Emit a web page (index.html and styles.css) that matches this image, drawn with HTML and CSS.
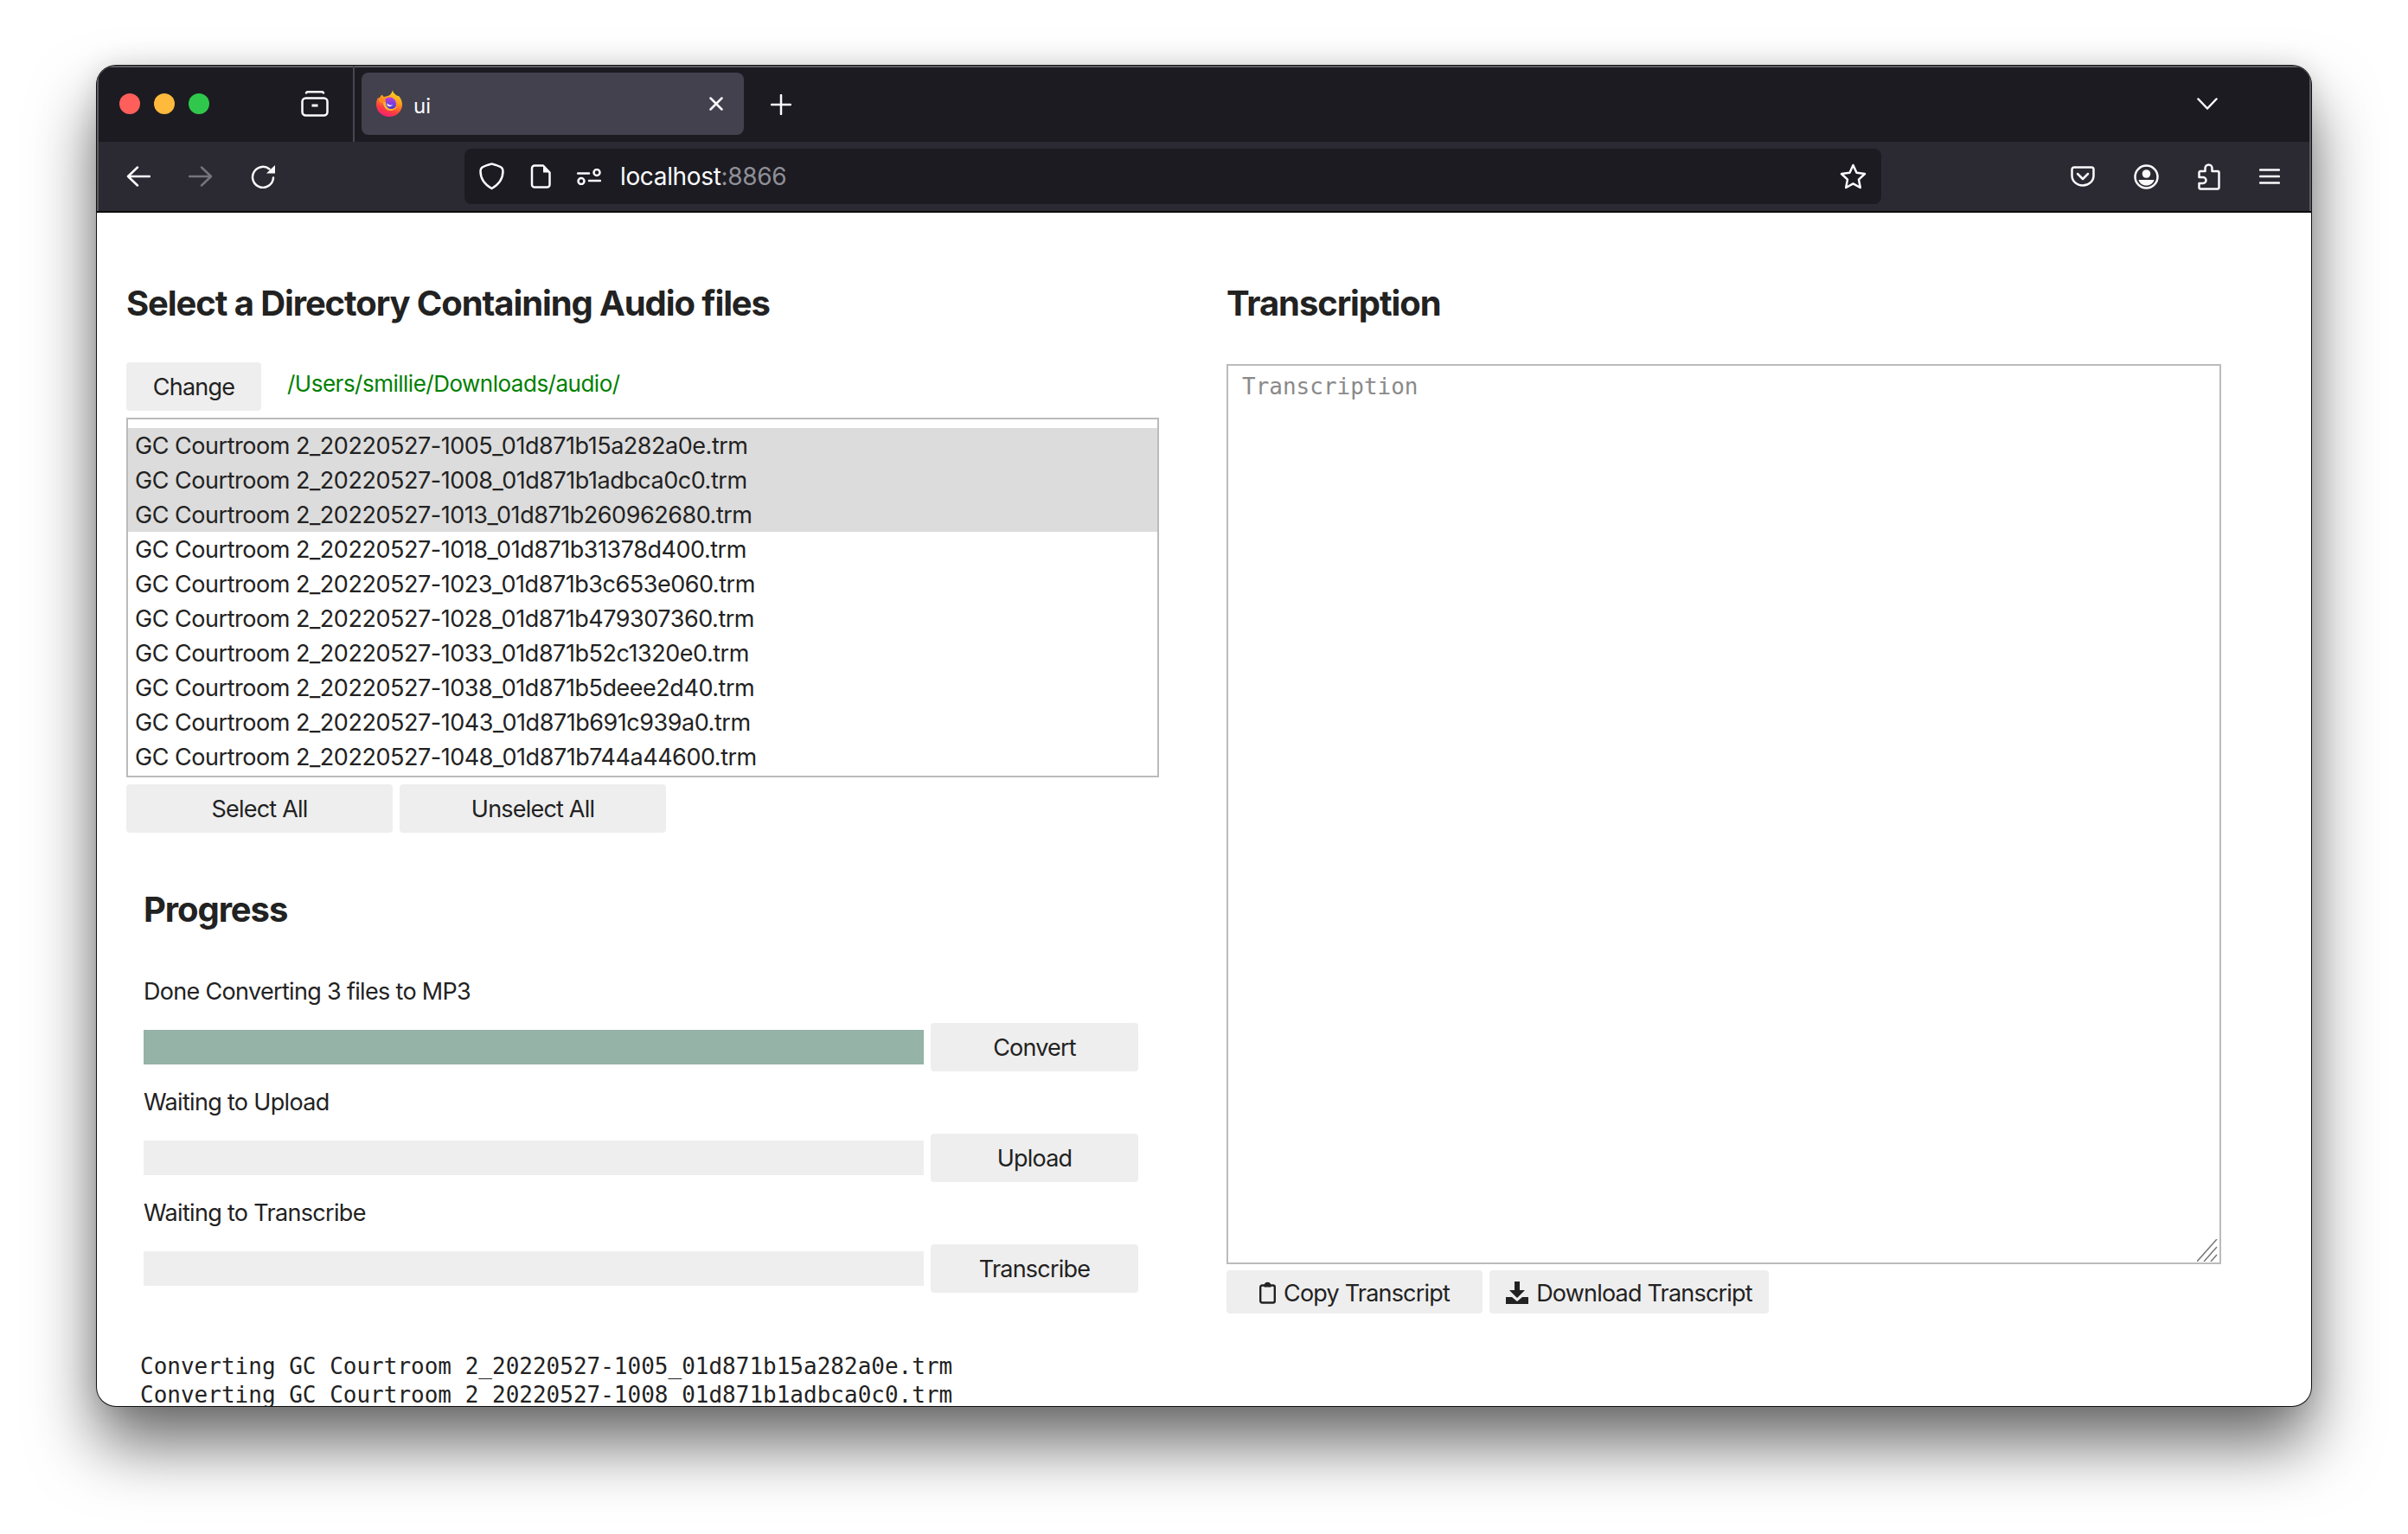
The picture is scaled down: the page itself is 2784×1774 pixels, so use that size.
FILE: index.html
```html
<!DOCTYPE html>
<html lang="en">

<head>
    <meta charset="UTF-8">
    <title>ui</title>
    <link rel="stylesheet" href="styles.css">
</head>

<body>
    <div class="window">
        <div class="titlebar">
            <div class="lights">
                <span class="light red"></span>
                <span class="light yellow"></span>
                <span class="light green"></span>
            </div>
            <svg class="ic tabview" viewBox="0 0 32 30" width="32" height="30">
                <path d="M6 2.500c.5-1 1-1.300 2-1.300h16c1 0 1.500.3 2 1.300" />
                <rect x="1.500" y="8.500" width="29" height="20" rx="4" />
                <path d="M12.500 17h7" stroke-width="3" stroke-linecap="butt" />
            </svg>
            <div class="tab-sep"></div>
            <div class="tab">
                <svg class="favicon" viewBox="0 0 30 31" width="30" height="31">
                    <defs>
                        <linearGradient id="fox" x1="0.75" y1="0" x2="0.35" y2="1">
                            <stop offset="0" stop-color="#ffe226" />
                            <stop offset="0.4" stop-color="#ff9a1f" />
                            <stop offset="0.75" stop-color="#ff3d3d" />
                            <stop offset="1" stop-color="#f01f78" />
                        </linearGradient>
                        <linearGradient id="globe" x1="0.5" y1="0" x2="0.5" y2="1">
                            <stop offset="0" stop-color="#c03adf" />
                            <stop offset="0.6" stop-color="#6a3fe0" />
                            <stop offset="1" stop-color="#4a35c8" />
                        </linearGradient>
                    </defs>
                    <path fill="url(#fox)" d="M19 0c0 3 2 4 4 6 1 .8 2 1 3 1 3 3 4 7 4 10 0 8-7 14-15 14S0 25 0 17c0-3 .6-6 2-8 0 1 .5 2 1 2.500C3.500 9 5 6.500 7 5.500c.5 1.500 1 2 2 2.500 3-.5 6-1 7.500-3C17.500 4 18.500 2 19 0z" />
                    <circle cx="15.500" cy="16" r="7.500" fill="url(#globe)" />
                    <path fill="#ffb52e" d="M8 14c-.5 5 3.500 10 8.500 10 4 0 7-2.500 8-6-2 3-5 4.500-8 4-3.500-.5-6-4-5.500-8z" />
                    <path fill="#ff8a1f" d="M2 9c3 0 7 1 9.500 3.500-1 1.500-2.500 2.500-4.500 2.500-2.500 0-4-2.500-5-6z" />
                    <path fill="#f7f0ff" d="M12.500 15c1 2 4 3.500 6.500 2-1 2.500-5 3-6.500.5z" />
                </svg>
                <span class="tab-title">ui</span>
                <svg class="ic tab-close" viewBox="0 0 16 16" width="16" height="16">
                    <path d="M1.500 1.500l13 13M14.500 1.500l-13 13" />
                </svg>
            </div>
            <svg class="ic newtab" viewBox="0 0 24 24" width="24" height="24">
                <path d="M12 1v22M1 12h22" />
            </svg>
            <svg class="ic tablist" viewBox="0 0 24 14" width="24" height="14">
                <path d="M1.500 1.500L12 12.500 22.500 1.500" />
            </svg>
        </div>

        <div class="toolbar">
            <svg class="ic" viewBox="0 0 28 24" width="28" height="24">
                <path d="M27 12H2M13 1.500L2 12l11 10.500" />
            </svg>
            <svg class="ic dim" viewBox="0 0 28 24" width="28" height="24">
                <path d="M1 12h25M15 1.500L26 12 15 22.500" />
            </svg>
            <svg class="ic" viewBox="0 0 28 27" width="28" height="27">
                <path d="M21.500 4.500A12 12 0 1 0 26 14.500" />
                <path class="solid" d="M18 9.500h10V0z" />
            </svg>
            <div class="urlbar">
                <svg class="ic" viewBox="0 0 29 32" width="29" height="32">
                    <path d="M14.500 1.500c1 0 10 3 11.500 4.500 1 1 1.500 2 1.500 4 0 9-6 16-13 20C7.500 26 1.500 19 1.500 10c0-2 .5-3 1.500-4C4.500 4.500 13.500 1.500 14.500 1.500z" />
                </svg>
                <svg class="ic" viewBox="0 0 24 28" width="24" height="28">
                    <path d="M5 1.500h10l7.500 8v14a3 3 0 0 1-3 3H5a3 3 0 0 1-3-3v-19a3 3 0 0 1 3-3z" />
                    <path class="solid" d="M15 1.500l7.500 8H15z" />
                </svg>
                <svg class="ic perms" viewBox="0 0 28 19" width="28" height="19">
                    <path d="M1 5.500h13M14 14h13" />
                    <circle cx="23" cy="4.500" r="3.500" />
                    <circle cx="5" cy="14.500" r="3.500" />
                </svg>
                <span class="url">localhost<span class="port">:8866</span></span>
                <svg class="ic" viewBox="0 0 31 30" width="31" height="30">
                    <path d="M15.500 2l4 8.800 9.500 1.200-7 6.600 1.800 9.400-8.300-4.700-8.300 4.700 1.800-9.400-7-6.600 9.500-1.200z" />
                </svg>
            </div>
            <div class="tools">
                <svg class="ic" viewBox="0 0 28 24" width="28" height="24">
                    <path d="M4 1.500h20A2.500 2.500 0 0 1 26.500 4v7C26.500 17.500 21 22.500 14 22.500S1.500 17.500 1.500 11V4A2.500 2.500 0 0 1 4 1.500z" />
                    <path d="M8 9l6 6 6-6" />
                </svg>
                <svg class="ic" viewBox="0 0 29 29" width="29" height="29">
                    <circle cx="14.500" cy="14.500" r="13" />
                    <circle class="solid" cx="14.500" cy="11" r="4.800" />
                    <path class="solid" d="M5.500 18h18c-1 4-4.500 6.500-9 6.500s-8-2.500-9-6.500z" />
                </svg>
                <svg class="ic" viewBox="0 0 26 31" width="26" height="31">
                    <path d="M3 9h5.500V5.500a4 4 0 0 1 8 0V9H23a1.500 1.500 0 0 1 1.500 1.500v17.500a1.500 1.500 0 0 1-1.500 1.500H3A1.500 1.500 0 0 1 1.500 28v-5H6a3.500 3.500 0 0 0 0-7H1.500v-5.500A1.500 1.500 0 0 1 3 9z" />
                </svg>
                <svg class="ic" viewBox="0 0 24 18" width="24" height="18">
                    <path d="M1 1.500h22M1 9h22M1 16.500h22" />
                </svg>
            </div>
        </div>

        <div class="content">
            <div class="left">
                <h2>Select a Directory Containing Audio files</h2>
                <div class="dir-row">
                    <button class="btn change">Change</button>
                    <span class="dir-path">/Users/smillie/Downloads/audio/</span>
                </div>
                <div class="file-list">
                    <div class="file selected">GC Courtroom 2_20220527-1005_01d871b15a282a0e.trm</div>
                    <div class="file selected">GC Courtroom 2_20220527-1008_01d871b1adbca0c0.trm</div>
                    <div class="file selected">GC Courtroom 2_20220527-1013_01d871b260962680.trm</div>
                    <div class="file">GC Courtroom 2_20220527-1018_01d871b31378d400.trm</div>
                    <div class="file">GC Courtroom 2_20220527-1023_01d871b3c653e060.trm</div>
                    <div class="file">GC Courtroom 2_20220527-1028_01d871b479307360.trm</div>
                    <div class="file">GC Courtroom 2_20220527-1033_01d871b52c1320e0.trm</div>
                    <div class="file">GC Courtroom 2_20220527-1038_01d871b5deee2d40.trm</div>
                    <div class="file">GC Courtroom 2_20220527-1043_01d871b691c939a0.trm</div>
                    <div class="file">GC Courtroom 2_20220527-1048_01d871b744a44600.trm</div>
                </div>
                <div class="select-row">
                    <button class="btn select-btn">Select All</button>
                    <button class="btn select-btn">Unselect All</button>
                </div>

                <div class="progress">
                    <h2>Progress</h2>
                    <div class="step">
                        <div class="step-label">Done Converting 3 files to MP3</div>
                        <div class="step-row">
                            <div class="bar"><div class="bar-fill" style="width: 100%"></div></div>
                            <button class="btn step-btn">Convert</button>
                        </div>
                    </div>
                    <div class="step">
                        <div class="step-label">Waiting to Upload</div>
                        <div class="step-row">
                            <div class="bar"></div>
                            <button class="btn step-btn">Upload</button>
                        </div>
                    </div>
                    <div class="step">
                        <div class="step-label">Waiting to Transcribe</div>
                        <div class="step-row">
                            <div class="bar"></div>
                            <button class="btn step-btn">Transcribe</button>
                        </div>
                    </div>
                </div>

                <pre class="log">Converting GC Courtroom 2_20220527-1005_01d871b15a282a0e.trm
Converting GC Courtroom 2_20220527-1008_01d871b1adbca0c0.trm</pre>
            </div>

            <div class="right">
                <h2>Transcription</h2>
                <div class="transcript-box">
                    <textarea class="transcript" placeholder="Transcription"></textarea>
                    <svg class="resizer" viewBox="0 0 24 26" width="24" height="26">
                        <path d="M0 26L23 0M8 26L23 9M16 26L23 18" />
                    </svg>
                </div>
                <div class="transcript-btns">
                    <button class="btn copy copy-btn">
                        <svg viewBox="0 0 19 26" width="19" height="26">
                            <path class="clip" d="M7 4.500a2.500 2.500 0 0 1 5 0" />
                            <rect class="clip" x="1.200" y="4.500" width="16.600" height="20" rx="2" />
                            <path d="M5.500 3.500h8v3h-8z" />
                        </svg>
                        Copy Transcript
                    </button>
                    <button class="btn copy download-btn">
                        <svg viewBox="0 0 26 26" width="26" height="26">
                            <path d="M10 0h6v10h6l-9 9-9-9h6z" />
                            <path d="M0 18h7l6 5 6-5h7v8H0z" />
                        </svg>
                        Download Transcript
                    </button>
                </div>
            </div>
        </div>
    </div>
</body>
</html>
```

FILE: styles.css
```css
body {
    margin: 0;
    padding: 76px 112px 0;
    height: 1774px;
    box-sizing: border-box;
    background: #fff;
    overflow: hidden;
    font-family: Inter, "Liberation Sans", sans-serif;
    color: #222;
}

.window {
    width: 2560px;
    height: 1550px;
    display: flex;
    flex-direction: column;
    border-radius: 22px;
    overflow: hidden;
    background: #fff;
    box-shadow: 0 0 0 1px #111, 0 44px 76px rgba(0, 0, 0, 0.58), 0 0 30px rgba(0, 0, 0, 0.12);
}

/* browser chrome */
.ic {
    fill: none;
    stroke: #fbfbfe;
    stroke-width: 2.5;
    stroke-linecap: round;
    stroke-linejoin: round;
    flex: none;
}

.ic .solid {
    fill: #fbfbfe;
    stroke: none;
}

.ic.dim {
    stroke: #75747c;
}

.titlebar {
    height: 88px;
    flex: none;
    display: flex;
    align-items: center;
    background: #1c1b22;
    box-shadow: inset 2px 2px 0 #5c5c62, inset -2px 0 0 #5c5c62;
}

.lights {
    display: flex;
    gap: 16px;
    margin-left: 26px;
}

.light {
    width: 24px;
    height: 24px;
    border-radius: 50%;
}

.red { background: #ff5f5a; }
.yellow { background: #ffb93c; }
.green { background: #30c84c; }

.tabview {
    margin-left: 106px;
}

.tab-sep {
    width: 2px;
    align-self: stretch;
    margin-left: 28px;
    background: #48474f;
}

.tab {
    width: 442px;
    height: 72px;
    margin-left: 8px;
    box-sizing: border-box;
    padding: 0 24px 0 17px;
    display: flex;
    align-items: center;
    background: #42414d;
    border-radius: 8px;
    color: #fbfbfe;
    font-size: 24px;
}

.favicon {
    flex: none;
    margin-top: -2px;
}

.tab-title {
    margin-left: 13px;
    padding-top: 5px;
    flex: 1;
}

.newtab {
    margin-left: 31px;
    margin-top: 2px;
}

.tablist {
    margin-left: auto;
    margin-right: 108px;
}

.toolbar {
    height: 80px;
    flex: none;
    display: flex;
    align-items: center;
    gap: 44px;
    padding-left: 34px;
    background: #2b2a33;
    border-bottom: 2px solid #0c0c0d;
    box-shadow: inset 2px 0 0 #5c5c62, inset -2px 0 0 #5c5c62;
}

.urlbar {
    width: 1638px;
    height: 64px;
    margin-left: 175px;
    flex: none;
    box-sizing: border-box;
    display: flex;
    align-items: center;
    gap: 30px;
    padding: 0 17px;
    background: #1c1b22;
    border-radius: 8px;
}

.url {
    flex: 1;
    margin-left: -8px;
    font-size: 28px;
    letter-spacing: -0.35px;
    color: #fbfbfe;
}

.port {
    color: #8f8f96;
}

.tools {
    display: flex;
    align-items: center;
    gap: 45px;
    margin-left: 175px;
}

/* page */
.content {
    flex: 1;
    min-height: 0;
    display: flex;
    gap: 78px;
    padding: 0 0 0 34px;
    overflow: hidden;
}

.left {
    width: 1194px;
    flex: none;
}

.right {
    width: 1150px;
    flex: none;
}

h2 {
    margin: 0;
    font-size: 40px;
    line-height: 48px;
    font-weight: 700;
    letter-spacing: -1.1px;
    color: #222;
}

.left > h2,
.right > h2 {
    padding-top: 81px;
}

.btn {
    display: block;
    border: 0;
    background: #eee;
    border-radius: 4px;
    padding: 0;
    height: 56px;
    font-family: inherit;
    font-size: 27px;
    letter-spacing: -0.8px;
    color: #222;
}

.dir-row {
    display: flex;
    margin-top: 44px;
}

.change {
    width: 156px;
}

.dir-path {
    margin-left: 30px;
    font-size: 26px;
    letter-spacing: -0.5px;
    line-height: 50px;
    color: #008000;
}

.file-list {
    margin-top: 8px;
    height: 416px;
    box-sizing: border-box;
    border: 2px solid #bbb;
    padding-top: 10px;
}

.file {
    height: 40px;
    box-sizing: border-box;
    padding: 2px 0 0 8px;
    line-height: 38px;
    font-size: 27px;
    letter-spacing: -0.47px;
    white-space: nowrap;
}

.selected {
    background: #dcdcdc;
}

.select-row {
    display: flex;
    gap: 8px;
    margin-top: 8px;
}

.select-btn {
    width: 308px;
}

.progress {
    padding: 65px 24px 0 20px;
}

.step {
    margin-bottom: 16px;
}

.progress h2 + .step {
    margin-top: 51px;
}

.step-label {
    font-size: 27px;
    letter-spacing: -0.68px;
    line-height: 40px;
}

.step-row {
    display: flex;
    align-items: center;
    gap: 8px;
    margin-top: 16px;
}

.bar {
    flex: 1;
    height: 40px;
    background: #eee;
}

.bar-fill {
    height: 100%;
    background: #95b3a6;
}

.step-btn {
    width: 240px;
    flex: none;
}

.log {
    margin: 69px 0 0 16px;
    font-family: "DejaVu Sans Mono", monospace;
    font-size: 26px;
    line-height: 33px;
    color: #222;
}

.transcript-box {
    position: relative;
    margin-top: 46px;
}

.transcript {
    display: block;
    width: 100%;
    height: 1041px;
    box-sizing: border-box;
    border: 2px solid #bbb;
    padding: 8px 16px;
    font-family: "DejaVu Sans Mono", monospace;
    font-size: 26px;
    line-height: 32px;
    resize: none;
    outline: 0;
}

.transcript::placeholder {
    color: #8a8a8a;
}

/* drawn grip, sits over the textarea corner */
.resizer {
    position: absolute;
    right: 4px;
    bottom: 3px;
    fill: none;
    stroke: #777;
    stroke-width: 1.5;
}

.transcript-btns {
    display: flex;
    gap: 8px;
    margin-top: 7px;
}

.copy {
    height: 50px;
    padding-top: 2px;
    display: flex;
    align-items: center;
    justify-content: center;
    gap: 9px;
}

.copy-btn {
    width: 296px;
}

.download-btn {
    width: 323px;
}

.copy svg {
    fill: #222;
    flex: none;
}

.copy .clip {
    fill: none;
    stroke: #222;
    stroke-width: 2.4;
}
```
